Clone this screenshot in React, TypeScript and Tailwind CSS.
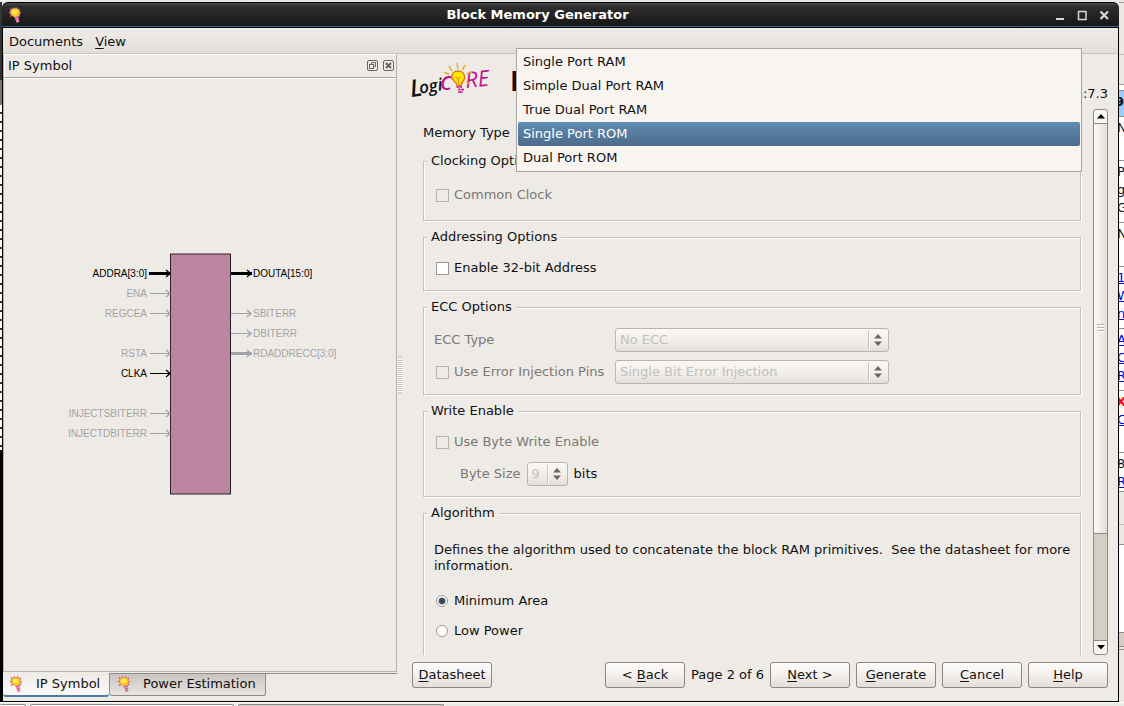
import type { ReactNode } from "react";

const memoryTypes = [
  "Single Port RAM",
  "Simple Dual Port RAM",
  "True Dual Port RAM",
  "Single Port ROM",
  "Dual Port ROM",
];

const inputs = [
  { name: "ADDRA[3:0]", y: 20, on: true, bus: true },
  { name: "ENA", y: 40, on: false, bus: false },
  { name: "REGCEA", y: 60, on: false, bus: false },
  { name: "RSTA", y: 100, on: false, bus: false },
  { name: "CLKA", y: 120, on: true, bus: false },
  { name: "INJECTSBITERR", y: 160, on: false, bus: false },
  { name: "INJECTDBITERR", y: 180, on: false, bus: false },
];

const outputs = [
  { name: "DOUTA[15:0]", y: 20, on: true, bus: true },
  { name: "SBITERR", y: 60, on: false, bus: false },
  { name: "DBITERR", y: 80, on: false, bus: false },
  { name: "RDADDRECC[3:0]", y: 100, on: false, bus: true },
];

function Bulb({ className = "" }: { className?: string }) {
  return (
    <svg viewBox="0 0 12 16" className={`h-4 w-3 shrink-0 overflow-visible ${className}`} aria-hidden="true">
      <path d="M1 1.500l2 2M4 .5l.5 2M8 .5l-.5 2M11 2l-2 1.500M0 5.500h2M10 6h2M1 9.500l2-1.500M11 9l-2-1" stroke="#c4588c" strokeWidth="1.400" />
      <path d="M1.300 5.500c0-2.500 2-4.300 4.700-4.300s4.700 1.800 4.700 4.300c0 2-1.200 2.800-1.700 4.500l-3 .6C4.600 9 1.300 8.500 1.300 5.500z" fill="#fcc81e" stroke="#e38a72" strokeWidth="0.800" />
      <ellipse cx="5.800" cy="5" rx="2.500" ry="2.200" fill="#fff04a" />
      <path d="M5.500 10l3.800-.7 1.200 5.500-2.700 1.400z" fill="#d0609c" />
      <path d="M6.200 12l3-.6M7 14.200l2.800-.6" stroke="#f0b8c8" strokeWidth="0.800" />
    </svg>
  );
}

function Logo() {
  return (
    <svg viewBox="0 0 84 38" className="h-[38px] w-[84px] overflow-visible" role="img" aria-label="LogiCORE">
      <g transform="rotate(-9 0 33)" fontFamily="'Open Sans', sans-serif" fontStyle="italic" fontWeight="600" fill="#111">
        <text x="-1" y="35" fontSize="24">L</text>
        <text x="8" y="33" fontSize="17">ogi</text>
      </g>
      <text x="28" y="28" fontSize="20" fontStyle="italic" fontWeight="600" fontFamily="'Open Sans', sans-serif" fill="#c0128a">C</text>
      <text x="54" y="26" fontSize="22" fontWeight="500" fontStyle="italic" fontFamily="'Open Sans', sans-serif" fill="#c0128a" transform="rotate(-6 54 26)">RE</text>
      <path d="M45 1l1 6M37 4l3 5M53 3l-2.500 5M32 10l5 2.500M60 10l-5 2M54 20l4 2" stroke="#dfb526" strokeWidth="1.500" />
      <path d="M46 9c4 0 6.700 2.600 6.700 6.200 0 3.600-3.200 4.400-3.500 8.300h-4c-.5-3.900-5.500-4.700-5.500-8.500C39.700 11.500 42.300 9 46 9z" fill="#ffe600" stroke="#e0741f" strokeWidth="1.500" />
      <path d="M44 15l2 2.500 2-2.500M46 17.500l1 5" stroke="#d98a1c" strokeWidth="1" fill="none" />
      <path d="M44.500 25h5.500M46 27.500h6M46 30h5" stroke="#c0128a" strokeWidth="1.700" />
      <path d="M47 25l3 5" stroke="#e9a0cc" strokeWidth="1" />
    </svg>
  );
}

function BlockSymbol() {
  return (
    <svg viewBox="0 2 270 242" className="h-[242px] w-[270px] overflow-visible" fontFamily="'Liberation Sans', Arial, sans-serif" fontSize="10">
      <rect x="105.500" y="2" width="60" height="240" fill="#bd85a4" stroke="#2e2029" />
      {inputs.map((p) => (
        <g key={p.name} transform="translate(0 1)" stroke={p.on ? "#000" : "#a3a2a6"} fill="none">
          <path d={`M${p.bus ? 84 : 85} ${p.y + 0.5}H105`} strokeWidth={p.bus ? 3 : 1} />
          <path d={`M101 ${p.y - 3}l4 3.500l-4 3.500`} strokeWidth="1.300" />
          <text x="82" y={p.y + 4} textAnchor="end" stroke="none" fill={p.on ? "#000" : "#a3a2a6"}>{p.name}</text>
        </g>
      ))}
      {outputs.map((p) => (
        <g key={p.name} transform="translate(0 1)" stroke={p.on ? "#000" : "#a3a2a6"} fill="none">
          <path d={`M166 ${p.y + 0.5}H187`} strokeWidth={p.bus ? 3 : 1} />
          <path d={`M182 ${p.y - 3}l4 3.500l-4 3.500`} strokeWidth="1.300" />
          <text x="188" y={p.y + 4} stroke="none" fill={p.on ? "#000" : "#a3a2a6"}>{p.name}</text>
        </g>
      ))}
    </svg>
  );
}

function Group({ title, className = "", children }: { title: string; className?: string; children: ReactNode }) {
  return (
    <fieldset className={`mt-2 min-w-0 shrink-0 border border-[#c4c2bf] px-[10px] shadow-[1px_1px_0_#fff,inset_1px_1px_0_#fff] ${className}`}>
      <legend className="-ml-[7px] bg-[#eeebe7] px-1">{title}</legend>
      {children}
    </fieldset>
  );
}

function Check({ label, disabled = false }: { label: string; disabled?: boolean }) {
  return (
    <label className={`flex h-4 items-center gap-[5px] pl-[2px] ${disabled ? "text-[#7b7875]" : ""}`}>
      <input
        type="checkbox"
        disabled={disabled}
        className={`size-[13px] shrink-0 appearance-none border ${disabled ? "border-[#b5b2ae] bg-[#eeebe7]" : "border-[#9a9692] bg-white"}`}
      />
      {label}
    </label>
  );
}

function Radio({ label, checked = false, className }: { label: string; checked?: boolean; className: string }) {
  return (
    <label className={`flex h-4 items-center gap-[6px] pl-[2px] ${className}`}>
      <input
        type="radio"
        name="algorithm"
        defaultChecked={checked}
        className="size-3 shrink-0 appearance-none rounded-full border border-[#a09a95] bg-white checked:bg-[radial-gradient(circle,#33475a_0_2px,#50657a_3px,#fff_4px)]"
      />
      {label}
    </label>
  );
}

function Combo({ id, value, className, label }: { id: string; value: string; className: string; label?: string }) {
  return (
    <span className={`relative flex h-6 ${className}`}>
      <select
        id={id}
        aria-label={label}
        disabled
        className="h-6 w-full appearance-none rounded-[3px] border border-[#b9b4af] bg-linear-to-b from-[#faf8f5] via-[#f2efeb] to-[#e6dfd9] pl-[4px] text-[#c2bfbc] opacity-100"
      >
        <option>{value}</option>
      </select>
      <svg viewBox="0 0 20 20" className="pointer-events-none absolute top-[2px] right-[1px] size-5" aria-hidden="true">
        <path d="M0.500 1v18" stroke="#c4c0bc" />
        <path d="M1.500 1v18" stroke="#fff" />
        <path d="M6 8.500L10 4l4 4.500zM6 11.500h8L10 16z" fill="#6b6764" />
      </svg>
    </span>
  );
}

function PushButton({ children }: { children: ReactNode }) {
  return (
    <button
      type="button"
      className="h-[26px] w-20 rounded-[3px] border border-[#8c8581] bg-linear-to-b from-[#fdfcfb] via-[#f3f0ed] to-[#e5deda]"
    >
      {children}
    </button>
  );
}

function Key({ children }: { children: string }) {
  return <span className="underline underline-offset-2">{children}</span>;
}

function ReportCell({ className, children }: { className: string; children?: ReactNode }) {
  return <div className={`shrink-0 border-b border-[#8d8d8d] pt-[2px] leading-[18px] ${className}`}>{children}</div>;
}

function ReportEdge() {
  return (
    <div className="flex w-[5px] shrink-0 flex-col overflow-hidden border-t border-[#9b9b99] bg-[#ece9e5] text-[13px]">
      <div className="h-[52px] shrink-0 border-b border-[#bdbab6]" />
      <div className="h-[30px] shrink-0 border-b border-[#9b9894]" />
      <div className="h-[6px] shrink-0 border-b border-[#8d8d8d] bg-white" />
      <ReportCell className="h-[26px] bg-[#99ccff] font-bold"><p className="-ml-1">9</p></ReportCell>
      <ReportCell className="h-11 bg-white"><p className="-ml-[2px]">N</p></ReportCell>
      <ReportCell className="h-[62px] bg-white"><p className="-ml-[2px]">P</p><p className="-ml-[2px]">g</p><p className="-ml-[2px]">G</p></ReportCell>
      <ReportCell className="h-11 bg-white"><p className="-ml-[2px]">N</p></ReportCell>
      <ReportCell className="h-[62px] bg-white text-[#00f] underline"><p className="-ml-[2px]">1</p><p className="-ml-[2px]">W</p><p className="-ml-[2px]">n</p></ReportCell>
      <ReportCell className="h-[62px] bg-white text-[#00f] underline"><p className="-ml-[2px]">A</p><p className="-ml-[2px]">C</p><p className="-ml-[2px]">R</p></ReportCell>
      <ReportCell className="h-[62px] bg-white"><p className="-ml-[3px] font-bold text-[#f00]">X</p><p className="-ml-[2px] text-[#00f] underline">C</p></ReportCell>
      <ReportCell className="h-[39px] bg-white"><p className="-ml-[2px]">8</p><p className="-ml-[2px] text-[#00f] underline">R</p></ReportCell>
      <div className="h-[33px] shrink-0 border-b border-[#bdbab6]" />
      <div className="h-5 shrink-0 border-b border-[#8d8d8d]" />
      <div className="h-[88px] shrink-0 border-b border-[#8d8985] bg-white" />
      <div className="h-[14px] shrink-0 border-b border-[#8d8985] bg-[#d6cdc5]" />
      <div className="h-[3px] shrink-0 border-b border-[#8d8985]" />
    </div>
  );
}

function TitleBar() {
  return (
    <header className="flex h-[25px] shrink-0 items-center rounded-t-md border-b border-black bg-linear-to-b from-[#4a4a4a] from-0% via-[#2e2e2e] via-15% to-[#161616] text-white shadow-[inset_0_-1px_0_#46658a]">
      <div className="w-[21px] pl-[7px]"><Bulb /></div>
      <h1 className="flex-1 text-center text-[13px] font-bold">Block Memory Generator</h1>
      <div className="flex w-[67px] items-center gap-[6px]">
        {[
          { name: "Minimize", d: "M4 12h8", w: 2 },
          { name: "Maximize", d: "M4 4.500h8M4.500 4v8.500h7.500V4", w: 1.5 },
          { name: "Close", d: "M4.500 4.500l7.500 7.500M12 4.500L4.500 12", w: 2.2 },
        ].map((b) => (
          <button key={b.name} type="button" aria-label={b.name}>
            <svg viewBox="0 0 16 16" className="size-4" fill="none" stroke="#d8d8d8" strokeWidth={b.w}>
              <path d={b.d} />
            </svg>
          </button>
        ))}
      </div>
    </header>
  );
}

function DockPanel() {
  return (
    <section className="flex w-[394px] shrink-0 flex-col">
      <div className="flex flex-1 flex-col border-r border-b border-l border-[#b5b2ae]">
        <div className="flex h-6 shrink-0 items-center border-b border-[#aaa7a3] pr-[2px] pl-1 shadow-[inset_1px_1px_0_#fff,0_1px_0_#fff]">
          <h2 className="flex-1">IP Symbol</h2>
          <div className="flex gap-[5px]">
            <button type="button" aria-label="Float">
              <svg viewBox="0 0 11 11" className="size-[11px]" fill="none" stroke="#686562">
                <rect x="0.500" y="0.500" width="10" height="10" rx="1.500" />
                <rect x="2.500" y="4.500" width="4" height="4" />
                <path d="M4.500 4.500v-2h4v4h-2" />
              </svg>
            </button>
            <button type="button" aria-label="Close panel">
              <svg viewBox="0 0 11 11" className="size-[11px]" fill="none" stroke="#686562">
                <rect x="0.500" y="0.500" width="10" height="10" rx="1.500" />
                <path d="M3 3l5 5M8 3L3 8" strokeWidth="2" />
              </svg>
            </button>
          </div>
        </div>
        <div className="flex flex-1 items-center justify-center">
          <BlockSymbol />
        </div>
      </div>
      <div className="flex h-[29px] shrink-0 items-start" role="tablist">
        <button type="button" role="tab" aria-selected="true" className="flex h-[25px] w-[106px] items-center rounded-b-[3px] border-b-2 border-[#4d7ba8] bg-linear-to-b from-[#eeebe7] to-[#faf8f5] pl-[7px]">
          <Bulb className="mr-[14px]" />
          IP Symbol
        </button>
        <div className="mt-px flex flex-1 border-t border-[#8f8b87]">
          <button type="button" role="tab" aria-selected="false" className="flex h-[22px] w-[157px] items-center rounded-b-[3px] border-r border-b border-l border-[#8f8b87] bg-linear-to-b from-[#c9c4c0] to-[#e9e5e2] pb-[2px] pl-[8px]">
            <Bulb className="mr-[13px]" />
            Power Estimation
          </button>
        </div>
      </div>
    </section>
  );
}

function ScrollBar() {
  return (
    <div className="flex w-[15px] shrink-0 flex-col rounded-[3px] border border-[#8f8883] bg-[#d6cdc5]">
      <button type="button" aria-label="Scroll up" className="flex h-[14px] shrink-0 items-center justify-center rounded-t-[3px] border-b border-[#8f8883] bg-[#f8f6f3]">
        <svg viewBox="0 0 8 5" className="h-[5px] w-2"><path d="M0 4.500L4 0l4 4.500z" /></svg>
      </button>
      <div className="flex flex-[27] items-center justify-center border-b border-[#8f8883] bg-linear-to-r from-[#fdfcfb] to-[#e4dfda]">
        <div className="h-2 w-[7px] bg-[repeating-linear-gradient(#b9b4af_0_1px,#fff_1px_2px,transparent_2px_3px)]" />
      </div>
      <div className="flex-[7]" />
      <button type="button" aria-label="Scroll down" className="flex h-[14px] shrink-0 items-center justify-center rounded-b-[3px] border-t border-[#8f8883] bg-[#f8f6f3]">
        <svg viewBox="0 0 8 5" className="h-[5px] w-2"><path d="M0 0h8L4 4.500z" /></svg>
      </button>
    </div>
  );
}

function Settings() {
  return (
    <main className="relative flex min-w-0 flex-1 flex-col pr-[10px] pl-2">
      <div className="flex h-[55px] shrink-0 items-start">
        <div className="pt-[8px]"><Logo /></div>
        <h2 className="ml-[14px] flex-1 truncate pt-3 font-['DejaVu_Sans'] text-[27px] leading-8 font-bold">Block Memory Generator</h2>
        <p className="pt-8">Version:7.3</p>
      </div>
      <div className="flex min-h-0 flex-1">
        <form className="flex min-w-0 flex-1 flex-col overflow-hidden pt-3 pr-3 pl-[11px]">
          <div className="flex h-6 shrink-0 items-center gap-[6px]">
            <label htmlFor="memory-type">Memory Type</label>
            <select id="memory-type" defaultValue="Single Port ROM" className="h-6 flex-1 appearance-none rounded-[3px] border border-[#8c8581] pl-[4px]">
              {memoryTypes.map((t) => <option key={t}>{t}</option>)}
            </select>
          </div>
          <Group title="Clocking Options" className="pt-[18px] pb-[17px]">
            <Check label="Common Clock" disabled />
          </Group>
          <Group title="Addressing Options" className="pt-[15px] pb-[14px]">
            <Check label="Enable 32-bit Address" />
          </Group>
          <Group title="ECC Options" className="pt-[13px] pb-[10px]">
            <div className="grid grid-cols-[181px_274px] items-center gap-y-2">
              <label htmlFor="ecc-type" className="text-[#7b7875]">ECC Type</label>
              <Combo id="ecc-type" value="No ECC" className="w-full" />
              <Check label="Use Error Injection Pins" disabled />
              <Combo id="ecc-error" label="Error injection" value="Single Bit Error Injection" className="w-full" />
            </div>
          </Group>
          <Group title="Write Enable" className="pt-[15px] pb-[10px]">
            <Check label="Use Byte Write Enable" disabled />
            <div className="mt-3 flex items-center gap-[6px] pl-[26px]">
              <label htmlFor="byte-size" className="text-[#7b7875]">Byte Size</label>
              <Combo id="byte-size" value="9" className="w-[41px]" />
              <span>bits</span>
            </div>
          </Group>
          <Group title="Algorithm" className="pt-[21px] pb-8">
            <p className="-mr-2 whitespace-pre-wrap">Defines the algorithm used to concatenate the block RAM primitives.  See the datasheet for more information.</p>
            <Radio label="Minimum Area" checked className="mt-[19px]" />
            <Radio label="Low Power" className="mt-[14px]" />
          </Group>
        </form>
        <ScrollBar />
      </div>
      <div className="flex shrink-0 items-center gap-[6px] pt-[7px] pb-[13px]">
        <PushButton><Key>D</Key>atasheet</PushButton>
        <span className="flex-1" />
        <PushButton>&lt; <Key>B</Key>ack</PushButton>
        <span>Page 2 of 6</span>
        <PushButton><Key>N</Key>ext &gt;</PushButton>
        <PushButton><Key>G</Key>enerate</PushButton>
        <PushButton><Key>C</Key>ancel</PushButton>
        <PushButton><Key>H</Key>elp</PushButton>
      </div>
      <ul role="listbox" aria-label="Memory Type" className="absolute -top-[6px] right-9 left-28 border border-[#a9a6a2] bg-[#f8f5f1] p-px">
        {memoryTypes.map((t) => (
          <li
            key={t}
            role="option"
            aria-selected={t === "Single Port ROM"}
            className={`flex h-6 items-center rounded-[2px] pl-[5px] ${t === "Single Port ROM" ? "bg-linear-to-b from-[#628cb2] to-[#4b6c8c] text-white" : ""}`}
          >
            {t}
          </li>
        ))}
      </ul>
    </main>
  );
}

export default function App() {
  return (
    <div className="flex h-screen min-h-[706px] flex-col overflow-hidden bg-[#eceae7] pt-[2px] font-['DejaVu_Sans',sans-serif] text-[13px] leading-4 text-[#111]">
      <div className="flex min-h-0 flex-1">
        <div className="flex w-[2px] shrink-0 flex-col">
          <div className="h-[78px] bg-[#333]" />
          <div className="h-[25px] bg-[#777]" />
          <div className="h-[345px] bg-[repeating-linear-gradient(#fff_0_7px,#333_7px_9px)]" />
          <div className="flex-1 bg-black" />
        </div>
        <div className="flex min-w-0 flex-1 flex-col rounded-t-md bg-black pt-px">
          <TitleBar />
          <div className="mr-px mb-px ml-px flex min-h-0 flex-1 flex-col bg-[#eeebe7]">
            <nav className="flex h-[26px] shrink-0 items-center gap-3 border-b border-[#c9c6c2] bg-linear-to-b from-[#efece8] to-[#e2dfda] px-[6px] pt-[2px]">
              <button type="button">Documents</button>
              <button type="button"><Key>V</Key>iew</button>
            </nav>
            <div className="flex min-h-0 flex-1">
              <DockPanel />
              <div className="flex w-[7px] shrink-0 items-center pl-px">
                <div className="mb-1 h-10 w-1 bg-[repeating-linear-gradient(#c4c1bd_0_1px,#fff_1px_2px)]" />
              </div>
              <Settings />
            </div>
          </div>
        </div>
        <ReportEdge />
      </div>
      <div className="flex h-1 shrink-0 items-end gap-1 border-t border-white">
        <div className="h-[2px] w-[26px] rounded-t border-t border-r border-[#8f8b87] bg-white" />
        <div className="h-[2px] w-[204px] rounded-t border border-b-0 border-[#8f8b87] bg-white" />
        <div className="h-[2px] w-[206px] rounded-t border border-b-0 border-[#8f8b87] bg-[#cfcbc7]" />
      </div>
    </div>
  );
}
